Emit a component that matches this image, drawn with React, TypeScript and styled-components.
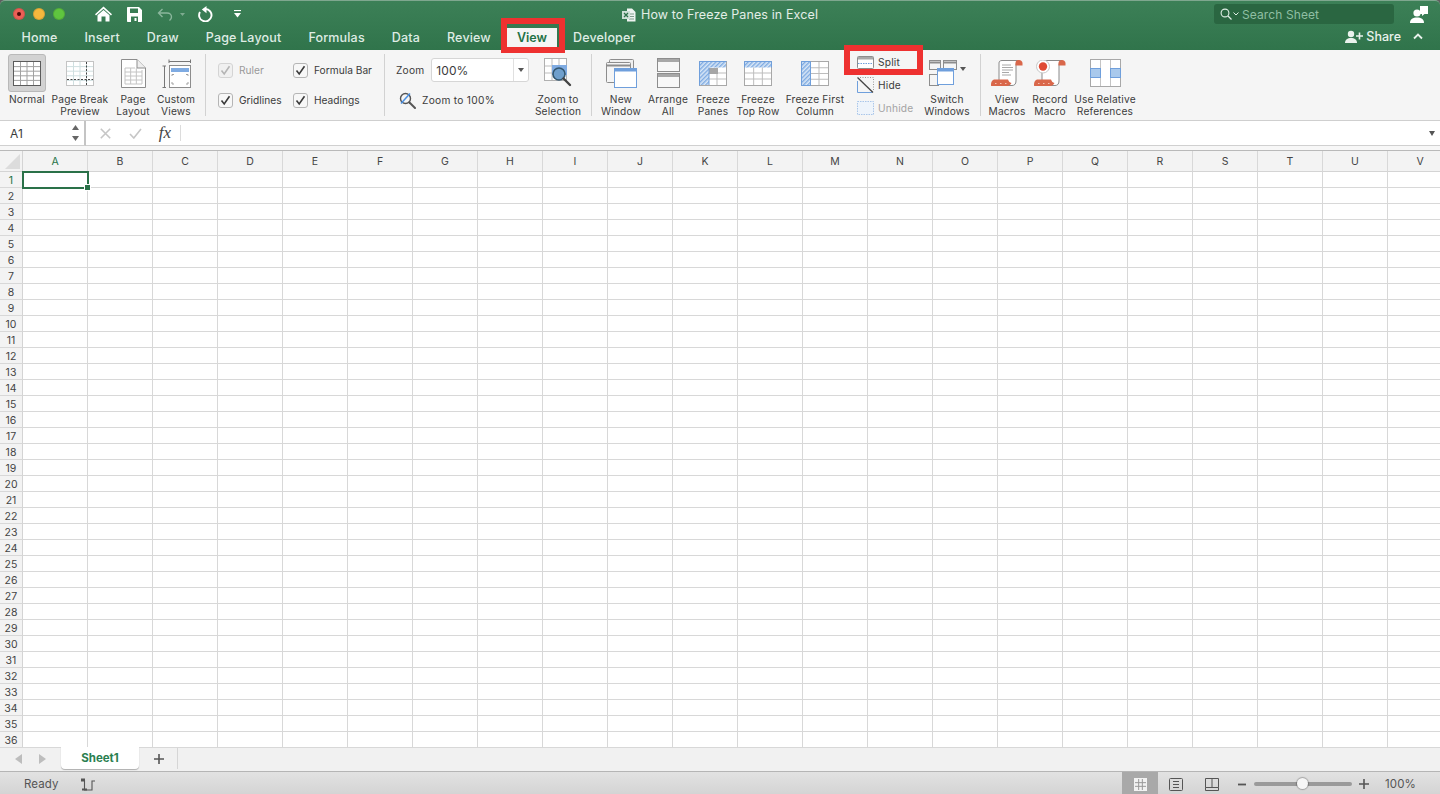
import type { ReactNode } from 'react';
import styled, { createGlobalStyle } from 'styled-components';

const GlobalStyle = createGlobalStyle`
  html, body {
    margin: 0;
    height: 100%;
    overflow: hidden;
    background: #5f5f5f;
    font-family: Inter, "Liberation Sans", sans-serif;
  }
  #root { height: 100%; }
  svg { display: block; }
`;

const Window = styled.div`
  position: relative;
  display: flex;
  flex-direction: column;
  height: 794px;
  width: 1440px;
  overflow: hidden;
`;

/* ---------- title bar ---------- */

const TitleBar = styled.div`
  flex: none;
  height: 50px;
  box-sizing: border-box;
  background: linear-gradient(#3c8057, #30744b);
  border-top: 1px solid #7fa78f;
  border-radius: 5px 5px 0 0;
  display: flex;
  flex-direction: column;
`;

const TopRow = styled.div`
  position: relative;
  height: 26px;
  display: flex;
  align-items: center;
  padding-left: 13px;
`;

const Light = styled.span<{ $c: string; $dot?: boolean }>`
  width: 12px;
  height: 12px;
  border-radius: 50%;
  margin-right: 8px;
  background: ${(p) => p.$c};
  box-shadow: inset 0 0 0 1px rgba(0, 0, 0, 0.12);
  display: flex;
  align-items: center;
  justify-content: center;
  &::after {
    content: '';
    width: 4px;
    height: 4px;
    border-radius: 50%;
    background: ${(p) => (p.$dot ? '#4d0a08' : 'transparent')};
  }
`;

const QuickTools = styled.div`
  display: flex;
  align-items: center;
  margin-left: 15px;
`;

const QuickSlot = styled.span<{ $w: number }>`
  width: ${(p) => p.$w}px;
  display: flex;
  justify-content: center;
`;

const TitleText = styled.div`
  position: absolute;
  left: 622px;
  top: 4px;
  display: flex;
  align-items: center;
  gap: 5px;
  color: #e3eee7;
  font-size: 12.5px;
  line-height: 20px;
  letter-spacing: 0.11px;
`;

const TopRight = styled.div`
  margin-left: auto;
  display: flex;
  align-items: center;
`;

const SearchBox = styled.div`
  width: 180px;
  height: 20px;
  margin-right: 16px;
  box-sizing: border-box;
  padding-left: 6px;
  border-radius: 3px;
  background: #2a6641;
  display: flex;
  align-items: center;
  gap: 1px;
  color: #8fbfa3;
  font-size: 12px;
  letter-spacing: 0.1px;
`;

const SearchLabel = styled.span`
  margin-left: 2px;
`;

const AccountSlot = styled.span`
  margin-right: 12px;
`;

const TabRow = styled.div`
  position: relative;
  flex: 1;
  display: flex;
  align-items: flex-end;
  padding-left: 8px;
`;

const Tab = styled.div<{ $active?: boolean }>`
  height: 22px;
  box-sizing: border-box;
  padding: 0 ${(p) => (p.$active ? 10 : 13.5)}px 3px;
  margin: 0 ${(p) => (p.$active ? 2.5 : 0)}px;
  display: flex;
  align-items: center;
  font-size: 12.5px;
  letter-spacing: ${(p) => (p.$active ? 0 : 0.17)}px;
  color: ${(p) => (p.$active ? '#1f7246' : '#dfece4')};
  background: ${(p) => (p.$active ? '#f5f5f5' : 'transparent')};
  font-weight: ${(p) => (p.$active ? 600 : 500)};
`;

const ShareBox = styled.div`
  margin-left: auto;
  align-self: center;
  margin-right: 17px;
  margin-bottom: 5px;
  display: flex;
  align-items: center;
  gap: 3px;
  color: #e9f2ec;
  font-size: 12.5px;
  font-weight: 500;
`;

const ChevronSlot = styled.span`
  margin-left: 9px;
`;

/* ---------- ribbon ---------- */

const Ribbon = styled.div`
  flex: none;
  height: 71px;
  box-sizing: border-box;
  background: #f5f5f5;
  border-bottom: 1px solid #cfcfcf;
  display: flex;
  padding-top: 4px;
  color: #3b3b3b;
  font-size: 10.2px;
  letter-spacing: 0.18px;
`;

const Group = styled.div<{ $w: number; $pl: number; $last?: boolean }>`
  box-sizing: border-box;
  width: ${(p) => p.$w}px;
  height: 62px;
  padding-left: ${(p) => p.$pl}px;
  border-right: ${(p) => (p.$last ? 'none' : '1px solid #d2d2d2')};
  display: flex;
`;

const Tool = styled.div<{ $w: number }>`
  width: ${(p) => p.$w}px;
  flex: none;
  display: flex;
  flex-direction: column;
  align-items: center;
  text-align: center;
  line-height: 12px;
  white-space: pre-line;
`;

const ToolIcon = styled.div<{ $active?: boolean; $nudge?: number }>`
  position: relative;
  flex: none;
  width: ${(p) => (p.$active ? '38px' : 'auto')};
  height: 38px;
  box-sizing: border-box;
  margin: 0 ${(p) => p.$nudge ?? 0}px 1px 0;
  display: flex;
  align-items: center;
  justify-content: center;
  border-radius: 3px;
  background: ${(p) => (p.$active ? '#d2d2d2' : 'transparent')};
  border: ${(p) => (p.$active ? '1px solid #b9b9b9' : 'none')};
`;

const Caret = styled.span`
  position: absolute;
  right: -9px;
  top: 13px;
  width: 0;
  height: 0;
  border-left: 3px solid transparent;
  border-right: 3px solid transparent;
  border-top: 4px solid #555;
`;

const CheckGrid = styled.div`
  display: grid;
  grid-template-columns: 75px 85px;
  grid-auto-rows: 30px;
  padding-top: 1px;
`;

const CheckItem = styled.div<{ $off?: boolean }>`
  display: flex;
  align-items: center;
  gap: 6px;
  height: 30px;
  white-space: nowrap;
  letter-spacing: 0;
  color: ${(p) => (p.$off ? '#9a9a9a' : '#3b3b3b')};
`;

const Box = styled.span<{ $off?: boolean }>`
  width: 15px;
  height: 15px;
  box-sizing: border-box;
  border: 1px solid ${(p) => (p.$off ? '#d4d4d4' : '#b5b5b5')};
  border-radius: 3px;
  background: ${(p) => (p.$off ? '#f0f0f0' : '#f7f7f7')};
  display: flex;
  align-items: center;
  justify-content: center;
`;

const ZoomCol = styled.div`
  width: 137px;
  flex: none;
  display: flex;
  flex-direction: column;
`;

const ZoomRow = styled.div`
  display: flex;
  align-items: center;
  gap: 7px;
  height: 24px;
  margin-top: 4px;
`;

const ZoomInput = styled.div`
  width: 98px;
  height: 24px;
  flex: none;
  box-sizing: border-box;
  padding-left: 4px;
  background: #fff;
  border: 1px solid #d6d6d6;
  border-radius: 3px;
  display: flex;
  align-items: center;
  justify-content: space-between;
  font-size: 12px;
  letter-spacing: 0.1px;
`;

const ZoomArrow = styled.span`
  width: 14px;
  height: 100%;
  border-left: 1px solid #e0e0e0;
  display: flex;
  align-items: center;
  justify-content: center;
  &::after {
    content: '';
    border-left: 3px solid transparent;
    border-right: 3px solid transparent;
    border-top: 4px solid #555;
  }
`;

const ZoomLink = styled.div`
  display: flex;
  align-items: center;
  gap: 6px;
  margin: 9px 0 0 3px;
  height: 18px;
  letter-spacing: 0.28px;
`;

const StackCol = styled.div`
  width: 79px;
  flex: none;
  padding-left: 11px;
  box-sizing: border-box;
  margin-top: -2px;
  display: flex;
  flex-direction: column;
  gap: 3px;
`;

const StackRow = styled.div<{ $off?: boolean }>`
  flex: none;
  height: 20px;
  display: flex;
  align-items: center;
  gap: 4px;
  color: ${(p) => (p.$off ? '#a3a3a3' : '#3b3b3b')};
`;

/* red annotation frames lying over the ribbon */
const RedFrame = styled.div<{ $l: number; $t: number; $w: number; $h: number }>`
  position: absolute;
  left: ${(p) => p.$l}px;
  top: ${(p) => p.$t}px;
  width: ${(p) => p.$w}px;
  height: ${(p) => p.$h}px;
  box-sizing: border-box;
  border: 6px solid #ee3130;
  pointer-events: none;
`;

/* ---------- formula bar ---------- */

const FormulaBar = styled.div`
  flex: none;
  height: 30px;
  box-sizing: border-box;
  background: #f7f7f7;
  border-bottom: 1px solid #b9b9b9;
  display: flex;
  padding-bottom: 4px;
`;

const NameBox = styled.div`
  width: 86px;
  flex: none;
  box-sizing: border-box;
  background: #fff;
  border-right: 2px solid #c4c4c4;
  border-bottom: 1px solid #d0d0d0;
  padding: 0 5px 0 10px;
  display: flex;
  align-items: center;
  justify-content: space-between;
  font-size: 12px;
  color: #3b3b3b;
`;

const Stepper = styled.span`
  display: flex;
  flex-direction: column;
  gap: 6px;
`;

const FormulaTools = styled.div`
  width: 100px;
  flex: none;
  background: #fff;
  border-bottom: 1px solid #d0d0d0;
  display: flex;
  align-items: center;
`;

const FxSlot = styled.span<{ $w: number }>`
  width: ${(p) => p.$w}px;
  flex: none;
  display: flex;
  justify-content: center;
`;

const Fx = styled.span`
  font-family: 'Liberation Serif', serif;
  font-style: italic;
  font-size: 17px;
  color: #444;
`;

const FxSep = styled.span`
  width: 1px;
  height: 16px;
  margin-left: -4px;
  background: #dcdcdc;
`;

const FormulaInput = styled.div`
  flex: 1;
  background: #fff;
  border-bottom: 1px solid #d0d0d0;
  display: flex;
  align-items: center;
  justify-content: flex-end;
  padding-right: 5px;
  &::after {
    content: '';
    border-left: 3.5px solid transparent;
    border-right: 3.5px solid transparent;
    border-top: 5px solid #555;
  }
`;

/* ---------- sheet ---------- */

const Sheet = styled.div`
  flex: 1;
  min-height: 0;
  overflow: hidden;
  background: #fff;
  font-size: 10.5px;
  color: #444;
`;

const HeadRow = styled.div`
  display: flex;
  height: 21px;
`;

const Corner = styled.div`
  width: 23px;
  flex: none;
  box-sizing: border-box;
  background: #f3f3f3;
  border-right: 1px solid #d4d4d4;
  border-bottom: 1px solid #d4d4d4;
  display: flex;
  align-items: flex-end;
  justify-content: flex-end;
  padding: 0 2px 2px 0;
  &::after {
    content: '';
    border-left: 15px solid transparent;
    border-bottom: 15px solid #dcdcdc;
  }
`;

const ColHead = styled.div<{ $on?: boolean }>`
  width: 65px;
  flex: none;
  box-sizing: border-box;
  background: #f3f3f3;
  border-right: 1px solid #d8d8d8;
  border-bottom: 1px solid ${(p) => (p.$on ? '#2c7a4b' : '#d4d4d4')};
  display: flex;
  align-items: center;
  justify-content: center;
  color: ${(p) => (p.$on ? '#1f7246' : '#444')};
`;

const Row = styled.div`
  display: flex;
  height: 16px;
`;

const RowHead = styled.div<{ $on?: boolean }>`
  width: 23px;
  flex: none;
  box-sizing: border-box;
  background: #f3f3f3;
  border-right: 1px solid ${(p) => (p.$on ? '#2c7a4b' : '#d4d4d4')};
  border-bottom: 1px solid #d8d8d8;
  display: flex;
  align-items: center;
  justify-content: center;
  padding-top: 1px;
  color: ${(p) => (p.$on ? '#1f7246' : '#444')};
`;

const Cell = styled.div`
  position: relative;
  width: 65px;
  flex: none;
  box-sizing: border-box;
  border-right: 1px solid #d8d8d8;
  border-bottom: 1px solid #d8d8d8;
`;

const Selection = styled.div`
  position: absolute;
  left: -1px;
  top: -1px;
  right: -2px;
  bottom: -2px;
  border: 2px solid #2a7148;
  z-index: 2;
  &::after {
    content: '';
    position: absolute;
    right: -4px;
    bottom: -4px;
    width: 5px;
    height: 5px;
    background: #2a7148;
    border: 1px solid #fff;
  }
`;

/* ---------- sheet tabs and status ---------- */

const TabBar = styled.div`
  flex: none;
  height: 25px;
  box-sizing: border-box;
  background: #f1f1f1;
  border-top: 1px solid #d8d8d8;
  border-bottom: 1px solid #b5b5b5;
  display: flex;
  align-items: flex-start;
`;

const NavArrows = styled.div`
  width: 61px;
  height: 22px;
  box-sizing: border-box;
  padding-left: 15px;
  display: flex;
  align-items: center;
  gap: 17px;
`;

const SheetTab = styled.div`
  width: 78px;
  height: 22px;
  margin-top: -1px;
  background: #fff;
  border-radius: 0 0 4px 4px;
  box-shadow: 0 1px 1px rgba(0, 0, 0, 0.28);
  display: flex;
  align-items: center;
  justify-content: center;
  color: #2a8050;
  font-size: 11.5px;
  font-weight: 700;
`;

const AddSheet = styled.div`
  width: 39px;
  height: 21px;
  padding-left: 2px;
  box-sizing: border-box;
  border-right: 1px solid #d6d6d6;
  display: flex;
  align-items: center;
  justify-content: center;
`;

const StatusBar = styled.div`
  flex: none;
  height: 22px;
  background: linear-gradient(#e2e2e2, #d4d4d4);
  display: flex;
  align-items: center;
  padding-left: 24px;
  color: #555;
  font-size: 11.5px;
  letter-spacing: 0.1px;
`;

const StatusText = styled.span`
  margin-top: 2px;
`;

const MacroSlot = styled.span`
  margin: 2px 0 0 22px;
`;

const StatusRight = styled.div`
  margin-left: auto;
  height: 100%;
  display: flex;
  align-items: center;
`;

const ViewBtn = styled.div<{ $on?: boolean }>`
  width: 36px;
  height: 100%;
  box-sizing: border-box;
  padding-top: 2px;
  display: flex;
  align-items: center;
  justify-content: center;
  background: ${(p) => (p.$on ? '#a9a9a9' : 'transparent')};
`;

const MinusBtn = styled.div`
  width: 24px;
  height: 100%;
  box-sizing: border-box;
  padding-top: 2px;
  display: flex;
  align-items: center;
  justify-content: center;
`;

const SliderTrack = styled.div`
  position: relative;
  width: 98px;
  height: 4px;
  margin: 2px 7px 0 0;
  border-radius: 2px;
  background: #9a9a9a;
`;

const SliderThumb = styled.div`
  position: absolute;
  left: 43px;
  top: -4px;
  width: 11px;
  height: 11px;
  border-radius: 50%;
  background: #f6f6f6;
  box-shadow: 0 0 1px 1px rgba(0, 0, 0, 0.25);
`;

const PlusSlot = styled.span`
  margin-top: 2px;
`;

const ZoomPct = styled.span`
  width: 55px;
  margin: 2px 0 0 16px;
  font-size: 11.5px;
`;

/* ---------- drawings ---------- */

const Ico = ({ w, h, children }: { w: number; h: number; children: ReactNode }) => (
  <svg width={w} height={h} viewBox={`0 0 ${w} ${h}`} fill="none">
    {children}
  </svg>
);

const gray = '#8d8d8d';
const blue = '#6f9fdc';

// table lines, shared by most of the ribbon icons
const Lines = ({ x, y, w, h, cols, rows, c = '#bdbdbd' }: { x: number; y: number; w: number; h: number; cols: number; rows: number; c?: string }) => {
  const d: string[] = [];
  for (let i = 1; i < cols; i++) d.push(`M${x + (w * i) / cols} ${y}V${y + h}`);
  for (let i = 1; i < rows; i++) d.push(`M${x} ${y + (h * i) / rows}H${x + w}`);
  return <path d={d.join('')} stroke={c} />;
};

const Hatch = ({ id }: { id: string }) => (
  <defs>
    <pattern id={id} width="3" height="3" patternUnits="userSpaceOnUse" patternTransform="rotate(45)">
      <rect width="3" height="3" fill="#d8e6f6" />
      <rect width="1.4" height="3" fill="#7fabe2" />
    </pattern>
  </defs>
);

const NormalIcon = () => (
  <Ico w={28} h={25}>
    <rect x=".5" y=".5" width="27" height="24" fill="#fff" stroke="#5b5b5b" />
    <Lines x={1} y={1} w={26} h={23} cols={4} rows={5} c="#a2a2a2" />
  </Ico>
);

const PageBreakIcon = () => (
  <Ico w={28} h={25}>
    <rect x=".5" y=".5" width="27" height="24" fill="#fff" stroke="#c4c4c4" />
    <Lines x={1} y={1} w={26} h={23} cols={4} rows={5} c="#cfdfe0" />
    <path d="M1 18.5H27M20.5 1V24" stroke="#444" strokeDasharray="2 1.5" />
  </Ico>
);

const PageLayoutIcon = () => (
  <Ico w={25} h={29}>
    <path d="M.5.5H16L24.5 9V28.5H.5Z" fill="#fff" stroke={gray} />
    <path d="M16 .5V9H24.5" fill="#eee" stroke={gray} />
    <Lines x={4} y={9} w={17} h={16} cols={3} rows={4} c="#c4c4c4" />
    <path d="M4 9H14M4 9V25H21V11" stroke="#c4c4c4" />
  </Ico>
);

const CustomViewsIcon = () => (
  <Ico w={29} h={29}>
    <path d="M7 .5V4M28.5.5V4M7 2.5H28.5M.5 7H4M.5 28.5H4M2.5 7V28.5" stroke="#777" />
    <rect x="7.5" y="6.5" width="21" height="22" fill="#fff" stroke={gray} />
    <rect x="9" y="9" width="18" height="4" fill="#7fabe2" />
    <path d="M10 17V15.5H12M24 15.5H26V17M10 23V25H12M24 25H26V23" stroke="#a0a0a0" />
  </Ico>
);

const ZoomSelIcon = () => (
  <Ico w={28} h={30}>
    <rect x=".5" y=".5" width="22" height="22" fill="#fff" stroke="#b0b0b0" />
    <Lines x={1} y={1} w={21} h={21} cols={3} rows={3} />
    <rect x="8" y="7" width="15" height="10" fill="#7fabe2" />
    <circle cx="15" cy="16" r="6" fill="#6f9fcc" stroke="#33566f" strokeWidth="1.6" />
    <path d="M19.5 20.5L26 27" stroke="#444" strokeWidth="2.4" strokeLinecap="round" />
  </Ico>
);

const WindowsIcon = () => (
  <Ico w={31} h={29}>
    <rect x="3.5" y=".5" width="24" height="20" rx="1" fill="#f0f0f0" stroke={gray} />
    <rect x=".5" y="3.5" width="24" height="20" rx="1" fill="#f5f5f5" stroke={gray} />
    <path d="M1 6.5H24" stroke={gray} strokeWidth="2" />
    <rect x="8.5" y="9.5" width="22" height="19" fill="#fff" stroke={blue} />
    <path d="M9 11H30" stroke={blue} strokeWidth="3" />
  </Ico>
);

const ArrangeIcon = () => (
  <Ico w={23} h={30}>
    <rect x=".5" y=".5" width="22" height="13" fill="#f8f8f8" stroke={gray} />
    <rect x="1" y="1" width="21" height="3" fill="#a8a8a8" />
    <rect x=".5" y="15.5" width="22" height="14" fill="#f8f8f8" stroke={gray} />
    <rect x="1" y="16" width="21" height="3" fill="#a8a8a8" />
  </Ico>
);

const FreezePanesIcon = () => (
  <Ico w={28} h={25}>
    <Hatch id="hp" />
    <rect x=".5" y=".5" width="27" height="24" fill="#fff" stroke="#a8a8a8" />
    <Lines x={9} y={6} w={18} h={18} cols={2} rows={3} />
    <rect x="1" y="1" width="26" height="5.5" fill="url(#hp)" />
    <rect x="1" y="1" width="9" height="23" fill="url(#hp)" />
    <rect x="10" y="7" width="9" height="6" fill="#a6a6a6" />
    <path d="M.5 24.5V.5H27.5M10 6.5V24" stroke={blue} />
  </Ico>
);

const FreezeTopIcon = () => (
  <Ico w={28} h={25}>
    <Hatch id="ht" />
    <rect x=".5" y=".5" width="27" height="24" fill="#fff" stroke="#a8a8a8" />
    <Lines x={1} y={6} w={26} h={18} cols={3} rows={3} />
    <rect x="1" y="1" width="26" height="5.5" fill="url(#ht)" />
    <path d="M.5 6.5V.5H27.5V6.5" stroke={blue} />
  </Ico>
);

const FreezeColIcon = () => (
  <Ico w={28} h={25}>
    <Hatch id="hc" />
    <rect x=".5" y=".5" width="27" height="24" fill="#fff" stroke="#a8a8a8" />
    <Lines x={9} y={1} w={18} h={23} cols={2} rows={4} />
    <rect x="1" y="1" width="8.5" height="23" fill="url(#hc)" />
    <path d="M9.5.5H.5V24.5H9.5V.5" stroke={blue} />
  </Ico>
);

const SplitIcon = () => (
  <Ico w={17} h={13}>
    <rect x=".5" y=".5" width="16" height="12" rx="1" fill="#fff" stroke={gray} />
    <rect x="1" y="1" width="15" height="2.5" fill="#a8a8a8" />
    <path d="M1 7.5H16" stroke={blue} strokeDasharray="1.5 1" />
  </Ico>
);

const HideIcon = () => (
  <Ico w={17} h={16}>
    <path d="M.5 4V15.5H15" stroke={blue} />
    <path d="M3 .5H16.5V13" stroke="#999" strokeDasharray="1 1.5" />
    <path d="M.5.5L16 15.5" stroke="#444" strokeWidth="1.3" />
  </Ico>
);

const UnhideIcon = () => (
  <Ico w={17} h={14}>
    <rect x=".5" y=".5" width="16" height="13" fill="#eef4fb" stroke="#a9c6ea" strokeDasharray="1.5 1" />
  </Ico>
);

const SwitchIcon = () => (
  <Ico w={28} h={27}>
    <rect x=".5" y=".5" width="11" height="9" fill="#f5f5f5" stroke={gray} />
    <rect x="14.5" y=".5" width="13" height="9" fill="#f5f5f5" stroke={gray} />
    <rect x=".5" y="14.5" width="9" height="11" fill="#f5f5f5" stroke={gray} />
    <path d="M1 2.5H11M15 2.5H27" stroke={gray} strokeWidth="2" />
    <rect x="8.5" y="8.5" width="16" height="16" fill="#fff" stroke={blue} />
    <path d="M9 10H24" stroke={blue} strokeWidth="3" />
  </Ico>
);

const ScrollBody = () => (
  <>
    <path d="M8 3C8 1.5 9 .5 11 .5H28V3.5H25V21C25 24 23.5 25.5 21 25.5H10L8 20Z" fill="#fff" stroke="#8a8a8a" />
    <path d="M24.5 5.5V3C24.5 1 26 0 28 0C30 0 31.5 1.5 31.5 3.5V5.5Z" fill="#d9674a" />
    <path d="M0 25.5C0 22 1 19.5 4 19.5H17C17.5 21 18.5 22.5 20.5 23C19.5 25 18 26 16 26H1C.5 26 0 26 0 25.5Z" fill="#d9674a" />
    <path d="M4 23.5H5.5M9 23.5H10.5M14 23.5H15.5" stroke="#f4c2b2" />
  </>
);

const ViewMacrosIcon = () => (
  <Ico w={32} h={27}>
    <ScrollBody />
    <path d="M11 5H20M11 7.5H22M11 10H22M11 12.5H18M11 15H20" stroke="#a8a8a8" />
  </Ico>
);

const RecordMacroIcon = () => (
  <Ico w={32} h={27}>
    <ScrollBody />
    <circle cx="9" cy="6.5" r="6.5" fill="#fff" stroke="#c8c8c8" />
    <circle cx="9" cy="6.5" r="4.2" fill="#df4b35" />
  </Ico>
);

const RelativeIcon = () => (
  <Ico w={31} h={28}>
    <rect x=".5" y=".5" width="30" height="27" fill="#fff" stroke="#a8a8a8" />
    <path d="M10.5 1V27M20.5 1V27" stroke="#c4c4c4" />
    <rect x=".5" y="9.5" width="10" height="9" fill="#a9c9ec" stroke={blue} />
    <rect x="20.5" y="9.5" width="10" height="9" fill="#a9c9ec" stroke={blue} />
  </Ico>
);

const CheckMark = ({ off }: { off?: boolean }) => (
  <svg width="11" height="11" viewBox="0 0 11 11" fill="none">
    <path d="M1.5 5.5L4.2 9L9.5 1.2" stroke={off ? '#b4b4b4' : '#3a3a3a'} strokeWidth="1.6" />
  </svg>
);

const ZoomGlass = () => (
  <Ico w={17} h={17}>
    <circle cx="6.5" cy="6.5" r="5" stroke="#555" strokeWidth="1.4" />
    <path d="M10.5 10.5L16 16" stroke="#555" strokeWidth="2" strokeLinecap="round" />
    <path d="M2 11.5L11 1.5" stroke="#4a90e2" strokeWidth="1.5" />
  </Ico>
);

const HomeIcon = () => (
  <Ico w={17} h={16}>
    <path d="M8.5 .5L17 8.2L16 9.4L8.5 2.8L1 9.4L0 8.2Z" fill="#fff" />
    <path d="M2.5 9.3L8.5 4L14.5 9.3V15.5H10.5V10.5H6.5V15.5H2.5Z" fill="#fff" />
  </Ico>
);

const SaveIcon = () => (
  <Ico w={15} h={15}>
    <path fillRule="evenodd" d="M1 0H12L15 3V14C15 14.6 14.6 15 14 15H1C.4 15 0 14.6 0 14V1C0 .4 .4 0 1 0ZM3 1.5V6H11V1.5ZM4 9.5V15H11V9.5Z" fill="#fff" />
    <rect x="7.5" y="11" width="2" height="3" fill="#fff" />
  </Ico>
);

const UndoIcon = () => (
  <Ico w={16} h={13}>
    <path d="M5.5 1L1.5 5L5.5 9M1.5 5H10C13 5 14.5 6.8 14.5 9C14.5 10.5 13.6 11.7 12.5 12.5" stroke="#8ab69c" strokeWidth="1.4" />
  </Ico>
);

const RedoIcon = () => (
  <Ico w={16} h={16}>
    <path d="M3 6A6.2 6.2 0 1 0 8.5 3" stroke="#fff" strokeWidth="1.9" />
    <path d="M9.5 0V7.2L4.8 3.4Z" fill="#fff" />
  </Ico>
);

const CustomizeIcon = () => (
  <Ico w={9} h={8}>
    <path d="M1 .5H8" stroke="#fff" strokeWidth="1.2" />
    <path d="M1 3H8L4.5 7.5Z" fill="#fff" />
  </Ico>
);

const MiniCaret = () => (
  <Ico w={5} h={3}>
    <path d="M0 0H5L2.5 3Z" fill="#7eab90" />
  </Ico>
);

const ExcelDocIcon = () => (
  <Ico w={14} h={14}>
    <path d="M5 .5H10L13.5 4V13.5H5Z" fill="#eef3f0" />
    <path d="M7 6H12M7 8.5H12M7 11H12" stroke="#7f9c8b" />
    <rect y="3" width="8" height="8" fill="#cfe0d6" />
    <path d="M2 5L6 9M6 5L2 9" stroke="#2d7048" strokeWidth="1.3" />
  </Ico>
);

const SearchGlass = () => (
  <Ico w={12} h={12}>
    <circle cx="5" cy="5" r="3.9" stroke="#dfeee5" strokeWidth="1.1" />
    <path d="M8 8L11.5 11.5" stroke="#dfeee5" strokeWidth="1.2" />
  </Ico>
);

const SearchCaret = () => (
  <Ico w={6} h={4}>
    <path d="M.5 .5L3 3L5.5 .5" stroke="#dfeee5" />
  </Ico>
);

const AccountIcon = () => (
  <Ico w={18} h={18}>
    <path d="M10 1H18V9H14.5L12 11V9H10Z" fill="#fff" />
    <circle cx="7" cy="8" r="3.6" fill="#fff" />
    <path d="M0 18C0 14 3 12.5 7 12.5C11 12.5 14 14 14 18Z" fill="#fff" />
  </Ico>
);

const ShareIcon = () => (
  <Ico w={18} h={13}>
    <circle cx="6" cy="4" r="3.2" fill="#e9f2ec" />
    <path d="M0 13C0 9.5 2.5 8 6 8C9.5 8 12 9.5 12 13Z" fill="#e9f2ec" />
    <path d="M14.5 2.5V9.5M11 6H18" stroke="#e9f2ec" strokeWidth="1.6" />
  </Ico>
);

const ChevronUp = () => (
  <Ico w={10} h={7}>
    <path d="M1 5.5L5 1.5L9 5.5" stroke="#e9f2ec" strokeWidth="1.8" />
  </Ico>
);

const StepUp = () => (
  <Ico w={7} h={5}>
    <path d="M3.5 0L7 5H0Z" fill="#666" />
  </Ico>
);

const StepDown = () => (
  <Ico w={7} h={5}>
    <path d="M0 0H7L3.5 5Z" fill="#666" />
  </Ico>
);

const CrossIcon = () => (
  <Ico w={11} h={11}>
    <path d="M.8 .8L10.2 10.2M10.2 .8L.8 10.2" stroke="#c6c6c6" strokeWidth="1.6" />
  </Ico>
);

const TickIcon = () => (
  <Ico w={13} h={11}>
    <path d="M1 6L4.8 10L12 1" stroke="#c6c6c6" strokeWidth="1.6" />
  </Ico>
);

const NavLeft = () => (
  <Ico w={7} h={10}>
    <path d="M7 0V10L0 5Z" fill="#bdbdbd" />
  </Ico>
);

const NavRight = () => (
  <Ico w={7} h={10}>
    <path d="M0 0V10L7 5Z" fill="#bdbdbd" />
  </Ico>
);

const PlusIcon = ({ c = '#555' }: { c?: string }) => (
  <Ico w={10} h={10}>
    <path d="M5 0V10M0 5H10" stroke={c} strokeWidth="1.6" />
  </Ico>
);

const MinusIcon = () => (
  <Ico w={8} h={3}>
    <path d="M0 1.5H8" stroke="#555" strokeWidth="1.8" />
  </Ico>
);

const MacroStatusIcon = () => (
  <Ico w={15} h={13}>
    <path d="M3.5 2V12H11V3H14" stroke="#555" strokeWidth="1.1" />
    <rect y=".5" width="4" height="3" fill="#555" />
    <rect x="1" y="10.5" width="5" height="2" fill="#555" />
  </Ico>
);

const GridViewIcon = () => (
  <Ico w={13} h={13}>
    <rect x=".5" y=".5" width="12" height="12" fill="#f2f2f2" stroke="#f2f2f2" />
    <Lines x={1} y={1} w={11} h={11} cols={3} rows={3} c="#9a9a9a" />
  </Ico>
);

const LayoutViewIcon = () => (
  <Ico w={14} h={13}>
    <rect x=".5" y=".5" width="13" height="12" rx="1" stroke="#555" />
    <path d="M4 3.5H10M4 6.5H10M4 9.5H10" stroke="#555" />
  </Ico>
);

const BreakViewIcon = () => (
  <Ico w={14} h={13}>
    <path d="M.5 9.5V.5H13.5V9.5H.5M.5 9.5V12.5H13.500V9.5M7 .5V9.5" stroke="#555" />
  </Ico>
);

/* ---------- data ---------- */

const TABS = ['Home', 'Insert', 'Draw', 'Page Layout', 'Formulas', 'Data', 'Review', 'View', 'Developer'];
const COLS = 'ABCDEFGHIJKLMNOPQRSTUV'.split('');
const ROWS = Array.from({ length: 36 }, (_, i) => i + 1);

export default function App() {
  return (
    <Window>
      <GlobalStyle />
      <TitleBar>
        <TopRow>
          <Light $c="#ec5f56" $dot />
          <Light $c="#f5b83d" />
          <Light $c="#5fc53f" />
          <QuickTools>
            <QuickSlot $w={31}><HomeIcon /></QuickSlot>
            <QuickSlot $w={31}><SaveIcon /></QuickSlot>
            <QuickSlot $w={29}><UndoIcon /></QuickSlot>
            <QuickSlot $w={6}><MiniCaret /></QuickSlot>
            <QuickSlot $w={40}><RedoIcon /></QuickSlot>
            <QuickSlot $w={24}><CustomizeIcon /></QuickSlot>
          </QuickTools>
          <TitleText>
            <ExcelDocIcon />
            How to Freeze Panes in Excel
          </TitleText>
          <TopRight>
            <SearchBox>
              <SearchGlass />
              <SearchCaret />
              <SearchLabel>Search Sheet</SearchLabel>
            </SearchBox>
            <AccountSlot><AccountIcon /></AccountSlot>
          </TopRight>
        </TopRow>
        <TabRow>
          {TABS.map((t) => (
            <Tab key={t} $active={t === 'View'}>{t}</Tab>
          ))}
          <ShareBox>
            <ShareIcon />
            Share
            <ChevronSlot><ChevronUp /></ChevronSlot>
          </ShareBox>
        </TabRow>
      </TitleBar>

      <Ribbon>
        <Group $w={206} $pl={8}>
          <Tool $w={38}><ToolIcon $active><NormalIcon /></ToolIcon>Normal</Tool>
          <Tool $w={68}><ToolIcon><PageBreakIcon /></ToolIcon>{'Page Break\nPreview'}</Tool>
          <Tool $w={38}><ToolIcon><PageLayoutIcon /></ToolIcon>{'Page\nLayout'}</Tool>
          <Tool $w={48}><ToolIcon><CustomViewsIcon /></ToolIcon>{'Custom\nViews'}</Tool>
        </Group>
        <Group $w={179} $pl={12}>
          <CheckGrid>
            <CheckItem $off><Box $off><CheckMark off /></Box>Ruler</CheckItem>
            <CheckItem><Box><CheckMark /></Box>Formula Bar</CheckItem>
            <CheckItem><Box><CheckMark /></Box>Gridlines</CheckItem>
            <CheckItem><Box><CheckMark /></Box>Headings</CheckItem>
          </CheckGrid>
        </Group>
        <Group $w={207} $pl={11}>
          <ZoomCol>
            <ZoomRow>
              Zoom
              <ZoomInput>100%<ZoomArrow /></ZoomInput>
            </ZoomRow>
            <ZoomLink><ZoomGlass />Zoom to 100%</ZoomLink>
          </ZoomCol>
          <Tool $w={50}><ToolIcon><ZoomSelIcon /></ToolIcon>{'Zoom to\nSelection'}</Tool>
        </Group>
        <Group $w={389} $pl={8}>
          <Tool $w={42}><ToolIcon><WindowsIcon /></ToolIcon>{'New\nWindow'}</Tool>
          <Tool $w={52}><ToolIcon><ArrangeIcon /></ToolIcon>{'Arrange\nAll'}</Tool>
          <Tool $w={38}><ToolIcon><FreezePanesIcon /></ToolIcon>{'Freeze\nPanes'}</Tool>
          <Tool $w={52}><ToolIcon><FreezeTopIcon /></ToolIcon>{'Freeze\nTop Row'}</Tool>
          <Tool $w={62}><ToolIcon><FreezeColIcon /></ToolIcon>{'Freeze First\nColumn'}</Tool>
          <StackCol>
            <StackRow><SplitIcon />Split</StackRow>
            <StackRow><HideIcon />Hide</StackRow>
            <StackRow $off><UnhideIcon />Unhide</StackRow>
          </StackCol>
          <Tool $w={44}>
            <ToolIcon $nudge={8}><SwitchIcon /><Caret /></ToolIcon>
            {'Switch\nWindows'}
          </Tool>
        </Group>
        <Group $w={160} $pl={4} $last>
          <Tool $w={44}><ToolIcon><ViewMacrosIcon /></ToolIcon>{'View\nMacros'}</Tool>
          <Tool $w={42}><ToolIcon><RecordMacroIcon /></ToolIcon>{'Record\nMacro'}</Tool>
          <Tool $w={68}><ToolIcon><RelativeIcon /></ToolIcon>{'Use Relative\nReferences'}</Tool>
        </Group>
      </Ribbon>

      <FormulaBar>
        <NameBox>
          A1
          <Stepper><StepUp /><StepDown /></Stepper>
        </NameBox>
        <FormulaTools>
          <FxSlot $w={38}><CrossIcon /></FxSlot>
          <FxSlot $w={22}><TickIcon /></FxSlot>
          <FxSlot $w={38}><Fx>fx</Fx></FxSlot>
          <FxSep />
        </FormulaTools>
        <FormulaInput />
      </FormulaBar>

      <Sheet>
        <HeadRow>
          <Corner />
          {COLS.map((c) => (
            <ColHead key={c} $on={c === 'A'}>{c}</ColHead>
          ))}
        </HeadRow>
        {ROWS.map((r) => (
          <Row key={r}>
            <RowHead $on={r === 1}>{r}</RowHead>
            {COLS.map((c) => (
              <Cell key={c}>{r === 1 && c === 'A' && <Selection />}</Cell>
            ))}
          </Row>
        ))}
      </Sheet>

      <TabBar>
        <NavArrows><NavLeft /><NavRight /></NavArrows>
        <SheetTab>Sheet1</SheetTab>
        <AddSheet><PlusIcon /></AddSheet>
      </TabBar>

      <StatusBar>
        <StatusText>Ready</StatusText>
        <MacroSlot><MacroStatusIcon /></MacroSlot>
        <StatusRight>
          <ViewBtn $on><GridViewIcon /></ViewBtn>
          <ViewBtn><LayoutViewIcon /></ViewBtn>
          <ViewBtn><BreakViewIcon /></ViewBtn>
          <MinusBtn><MinusIcon /></MinusBtn>
          <SliderTrack><SliderThumb /></SliderTrack>
          <PlusSlot><PlusIcon /></PlusSlot>
          <ZoomPct>100%</ZoomPct>
        </StatusRight>
      </StatusBar>

      <RedFrame $l={501} $t={18} $w={64} $h={35} />
      <RedFrame $l={844} $t={45} $w={79} $h={30} />
    </Window>
  );
}
